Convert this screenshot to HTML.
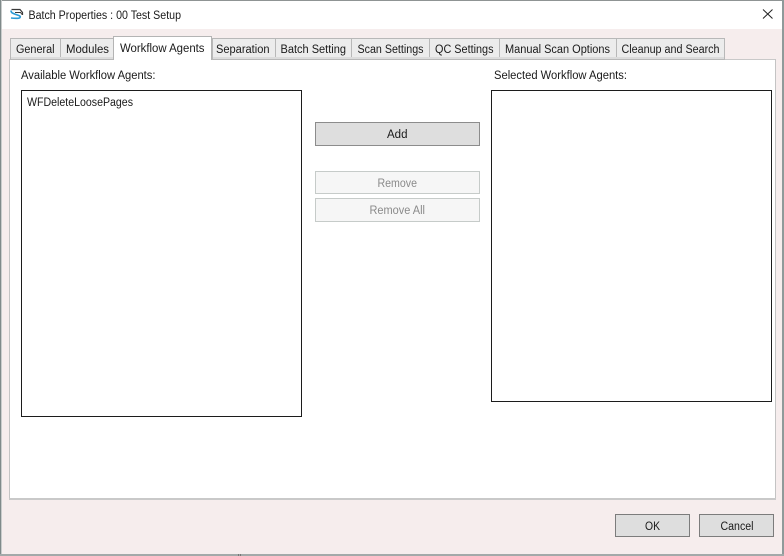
<!DOCTYPE html>
<html><head><meta charset="utf-8"><style>
html,body{margin:0;padding:0;background:#fff;width:784px;height:556px;overflow:hidden}
svg{display:block}
text{font-family:"Liberation Sans",sans-serif;font-size:11.5px;fill:#1a1a1a}
</style></head><body>
<svg width="784" height="556" viewBox="0 0 784 556" xmlns="http://www.w3.org/2000/svg" shape-rendering="crispEdges">
<rect width="784" height="556" fill="#f6eded"/>
<rect x="0" y="0" width="784" height="29" fill="#fff"/>
<rect x="0" y="0" width="784" height="1" fill="#8f9494"/>
<rect x="0" y="0" width="1" height="556" fill="#7f8a8a"/>
<rect x="1" y="0" width="1" height="556" fill="#c9cccc"/>
<rect x="782" y="0" width="2" height="556" fill="#8f9a9a"/>
<rect x="0" y="554" width="784" height="2" fill="#a3a9a9"/>
<rect x="238" y="554" width="1" height="2" fill="#777"/>
<rect x="240" y="554" width="1" height="2" fill="#777"/>

<!-- app icon -->
<g fill="none" shape-rendering="auto">
<path d="M11.500 9.500 H20 L22.500 12.500 V15" stroke="#3a3a3a" stroke-width="1.2"/>
<path d="M15 12.500 H20.500 L22 14.500" stroke="#3a3a3a" stroke-width="1"/>
<path d="M11 10.500 C11 13 13 13.500 16 14.500 C19 15.500 21 16 20 17.500 C19.500 18.500 15 18.500 11 18" stroke="#2b9bd6" stroke-width="1.6"/>
</g>
<text x="28.500" y="19" textLength="152.500" lengthAdjust="spacingAndGlyphs">Batch Properties : 00 Test Setup</text>
<!-- close -->
<path d="M763 9.500 L772.500 18.500 M772.500 9.500 L763 18.500" stroke="#222" stroke-width="1" fill="none" shape-rendering="auto"/>

<!-- panel -->
<rect x="9" y="59" width="767" height="441" fill="#fff"/>
<rect x="9" y="59" width="767" height="1" fill="#c9c9c9"/>
<rect x="9" y="59" width="1" height="441" fill="#c4c4c4"/>
<rect x="775" y="59" width="1" height="441" fill="#c4c4c4"/>
<rect x="9" y="498" width="767" height="2" fill="#c9c9c9"/>

<!-- tabs -->
<g fill="#ececec" stroke="#b8b8b8" stroke-width="1">
<rect x="10.500" y="38.500" width="50" height="21"/>
<rect x="60.500" y="38.500" width="53" height="21"/>
<rect x="212.500" y="38.500" width="63" height="21"/>
<rect x="275.500" y="38.500" width="76" height="21"/>
<rect x="351.500" y="38.500" width="78" height="21"/>
<rect x="429.500" y="38.500" width="70" height="21"/>
<rect x="499.500" y="38.500" width="117" height="21"/>
<rect x="616.500" y="38.500" width="108" height="21"/>
</g>
<rect x="11" y="57" width="102" height="2" fill="#dcdcdc"/>
<rect x="213" y="57" width="511" height="2" fill="#dcdcdc"/>
<rect x="113" y="36" width="99" height="24" fill="#fff"/>
<path d="M113.500 60 V36.500 H211.500 V60" fill="none" stroke="#b4b4b4"/>
<text x="16" y="53" textLength="38.500" lengthAdjust="spacingAndGlyphs">General</text>
<text x="66" y="53" textLength="43" lengthAdjust="spacingAndGlyphs">Modules</text>
<text x="120" y="52" textLength="84.500" lengthAdjust="spacingAndGlyphs">Workflow Agents</text>
<text x="216" y="53" textLength="53.500" lengthAdjust="spacingAndGlyphs">Separation</text>
<text x="280.500" y="53" textLength="65.500" lengthAdjust="spacingAndGlyphs">Batch Setting</text>
<text x="357.500" y="53" textLength="66" lengthAdjust="spacingAndGlyphs">Scan Settings</text>
<text x="435" y="53" textLength="58.500" lengthAdjust="spacingAndGlyphs">QC Settings</text>
<text x="505" y="53" textLength="105" lengthAdjust="spacingAndGlyphs">Manual Scan Options</text>
<text x="621.500" y="53" textLength="98" lengthAdjust="spacingAndGlyphs">Cleanup and Search</text>

<!-- labels -->
<text x="21" y="79" textLength="134.500" lengthAdjust="spacingAndGlyphs">Available Workflow Agents:</text>
<text x="494" y="79" textLength="133" lengthAdjust="spacingAndGlyphs">Selected Workflow Agents:</text>

<!-- lists -->
<rect x="21.500" y="90.500" width="280" height="326" fill="#fff" stroke="#1c1c1c"/>
<rect x="491.500" y="90.500" width="280" height="311" fill="#fff" stroke="#1c1c1c"/>
<text x="27" y="106" textLength="106" lengthAdjust="spacingAndGlyphs">WFDeleteLoosePages</text>

<!-- buttons -->
<rect x="315.500" y="122.500" width="164" height="23" fill="#dedede" stroke="#8c8c8c"/>
<text x="387" y="138" textLength="20.500" lengthAdjust="spacingAndGlyphs">Add</text>
<rect x="315.500" y="171.500" width="164" height="22" fill="#f6f6f6" stroke="#c6cbc9"/>
<text x="377.500" y="187" textLength="39.500" lengthAdjust="spacingAndGlyphs" style="fill:#8a8a8a">Remove</text>
<rect x="315.500" y="198.500" width="164" height="23" fill="#f6f6f6" stroke="#c6cbc9"/>
<text x="369.500" y="214" textLength="55.500" lengthAdjust="spacingAndGlyphs" style="fill:#8a8a8a">Remove All</text>
<rect x="615.500" y="514.500" width="74" height="22" fill="#dedede" stroke="#7c7c7c"/>
<text x="645" y="530" textLength="15" lengthAdjust="spacingAndGlyphs">OK</text>
<rect x="699.500" y="514.500" width="74" height="22" fill="#dedede" stroke="#7c7c7c"/>
<text x="720.500" y="530" textLength="33" lengthAdjust="spacingAndGlyphs">Cancel</text>
</svg>
</body></html>
